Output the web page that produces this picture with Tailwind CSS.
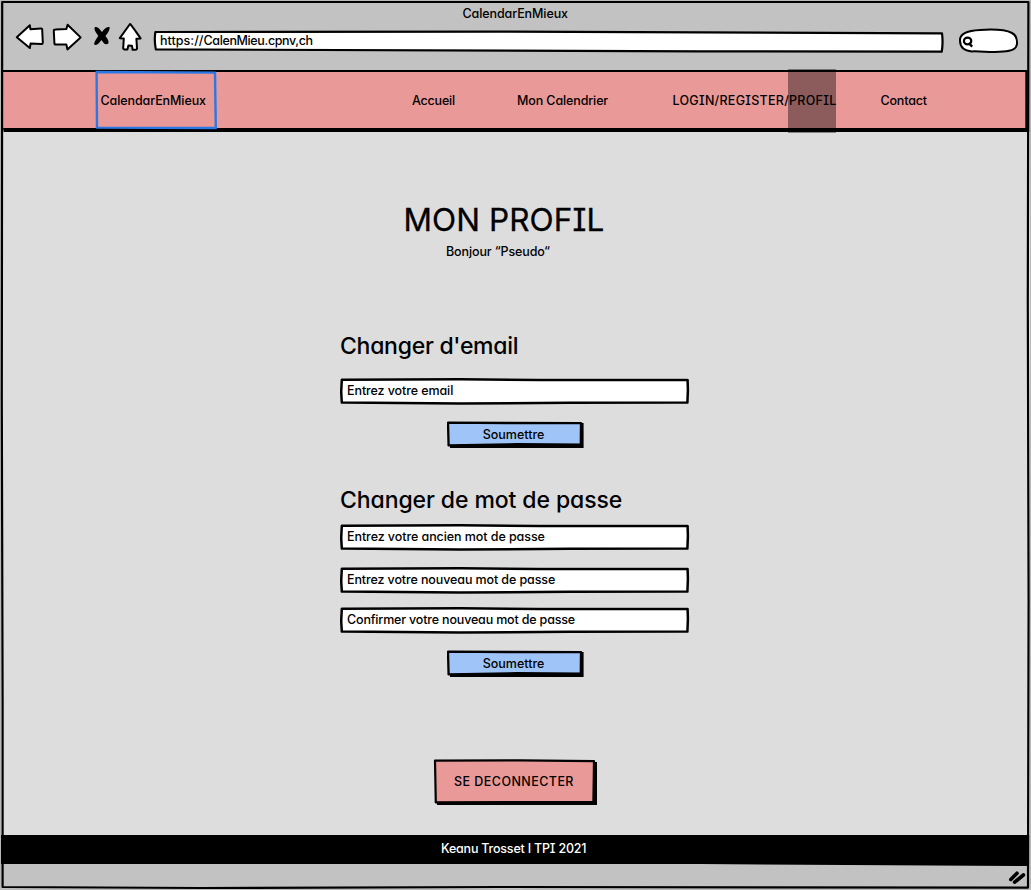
<!DOCTYPE html>
<html lang="fr">
<head>
<meta charset="utf-8">
<title>CalendarEnMieux</title>
<script src="https://cdn.jsdelivr.net/npm/@tailwindcss/browser@4"></script>
</head>
<body class="w-[1031px] h-[890px] overflow-hidden bg-[#c2c2c2] text-black font-medium text-[12.5px] leading-4 font-['Inter','Noto_Sans',sans-serif] [font-feature-settings:'cv11','cv08']">
<svg class="hidden">
  <symbol id="field" viewBox="0 0 350 27">
    <path d="M0 0H349V26H0Z" fill="#e9e9e9"/>
    <path d="M1.8 1.8L120 1.3L200 1.9L347.6 2L347.9 12L347.4 24.6L230 24.8L120 25.4L1.8 24.6L1.2 14Z" fill="#fff" stroke="#000" stroke-width="2.5" stroke-linejoin="round"/>
  </symbol>
  <symbol id="submit" viewBox="0 0 138 28">
    <path d="M3 4L135 2H136.6V27H3Z"/>
    <path d="M1 1.6L60 2L134 2.2L133.8 23.6L70 23.2L1.6 24.4Z" fill="#9fc5f8" stroke="#000" stroke-width="2.3" stroke-linejoin="round"/>
  </symbol>
</svg>
<div class="relative flex flex-col w-[1031px] h-[890px]">
  <header class="h-[70px] shrink-0 flex flex-col bg-[#c2c2c2]">
    <div class="h-[22px] pt-[6px] pl-[462.5px] whitespace-nowrap"><span class="tracking-[-0.09px]">CalendarEnMieux</span></div>
    <div class="flex h-[34px]">
      <svg class="w-[150px] h-[34px] shrink-0" viewBox="0 22 150 34" fill="#fff" stroke="#000" stroke-width="2" stroke-linejoin="round">
        <path d="M16.8 37.2L29.8 25.2L30.4 29.2L41 28.4Q42.4 28.4 42.2 30L42.8 42.6Q42.8 44.2 41.2 44L30.6 43.4L29.8 48Z"/>
        <path d="M53.8 31Q53.8 29.6 55.4 29.6L66.4 29L67.6 24.8L80.6 37.4L67.4 49.4L66.4 44.6L56 44.6Q54.4 44.6 54.4 43Z"/>
        <path d="M94.6 27.4C97.4 25.6 100 29.6 102 32C104 29.6 107 25.8 109.8 27.4C109.4 31.6 106.4 34.4 105.4 36C107 38 109.2 41 108.4 43.6C105 46 103 42 101.4 40C99.6 42 98 46 94.2 44.6C94 41.4 97.4 38 98.2 35.8C96.6 33 94 30.4 94.6 27.4Z" fill="#000" stroke="none"/>
        <path d="M130 24Q131 24.4 140.6 38.4L136.4 38.8L137 48.6Q136.8 50 135 49.8L132.6 49.8L132 45.8L128.4 45.6L127.4 49.6L124.4 49.4Q123 49.2 123.2 48L123.8 38.6L119.8 38.2Z"/>
      </svg>
      <div class="relative w-[796px] h-[34px] shrink-0 pt-[11px] pl-[10px]">
        <svg class="absolute inset-0 w-[796px] h-[34px]" viewBox="150 22 796 34"><path d="M155.4 32L500 31.6L942 33.4Q943.2 42 941.8 51.6L700 51.4L155.8 49.4Q154 40 155.4 32Z" fill="#fff" stroke="#000" stroke-width="2.2" stroke-linejoin="round"/></svg>
        <span class="relative whitespace-nowrap tracking-[-0.37px]"><span class="tracking-[0.04px]">https://</span>CalenMieu.cpnv,ch</span>
      </div>
      <svg class="w-[85px] h-[34px] shrink-0" viewBox="946 22 85 34" fill="none" stroke="#000">
        <path d="M960 40C960 33 968 30.6 980 30C992 29.2 1006 30 1012 33C1016 35.2 1017.4 39 1017 44C1016.6 49 1012 50.6 1003 51.6C992 52.8 982 51 972 51.4C964 50.8 959.8 47 960 40Z" fill="#fff" stroke-width="2"/>
        <ellipse cx="967.6" cy="41" rx="3.7" ry="3.3" stroke-width="2.2"/><path d="M968.6 43L972.2 46.6" stroke-width="2.4"/>
      </svg>
    </div>
  </header>

  <nav class="relative h-[62px] shrink-0 flex items-start pt-[23px] bg-[#ea9999] whitespace-nowrap">
    <svg class="absolute inset-0 w-[1031px] h-[62px]" viewBox="0 70 1031 62">
      <path d="M2 70.8H1026.4V129" fill="none" stroke="#000" stroke-width="2.2"/>
      <path d="M3 128H1028V132L500 132.4H4Z"/>
      <path d="M96.6 72L215 72.6L215.8 128L97 127.6Z" fill="none" stroke="#2b78e4" stroke-width="2.4" stroke-linejoin="round"/>
    </svg>
    <a class="relative w-[311.5px] ml-[100.5px] tracking-[-0.09px]">CalendarEnMieux</a>
    <a class="relative w-[105px] tracking-[-0.2px]">Accueil</a>
    <a class="relative w-[155.5px] tracking-[-0.12px]">Mon Calendrier</a>
    <a class="relative w-[208px] tracking-[0.27px]">LOGIN/REGISTER/PROFIL</a>
    <a class="relative tracking-[-0.18px]">Contact</a>
    <div class="absolute left-[788px] top-[-1px] w-[48px] h-[64px] bg-black/40"></div>
  </nav>

  <main class="h-[703px] shrink-0 bg-[#dddddd] pt-[67px] flex flex-col whitespace-nowrap">
    <h1 class="h-[42px] pl-[403.5px] text-[31.5px] leading-[42px] font-normal tracking-[0.1px] [-webkit-text-stroke:0.3px_#000]">MON PROFIL</h1>
    <p class="mt-[3px] pl-[446px] tracking-[-0.12px]">Bonjour “Pseudo“</p>
    <form class="pl-[340px] mt-[70px] flex flex-col">
      <h2 class="h-8 text-[23px] leading-8 tracking-[-0.27px]">Changer d'email</h2>
      <label class="relative block mt-4 w-[350px] h-[27px] pt-[5px] pl-[7px]"><svg class="absolute inset-0 w-[350px] h-[27px]"><use href="#field"/></svg><span class="relative tracking-[-0.09px]">Entrez votre email</span></label>
      <button type="button" class="relative block ml-[107px] mt-4 w-[138px] h-[28px] pb-[1px] pr-[5px]"><svg class="absolute inset-0 w-[138px] h-[28px]"><use href="#submit"/></svg><span class="relative">Soumettre</span></button>
    </form>
    <form class="pl-[340px] mt-[35px] flex flex-col">
      <h2 class="h-8 text-[23px] leading-8 tracking-[-0.09px]">Changer de mot de passe</h2>
      <label class="relative block mt-[8px] w-[350px] h-[27px] pt-[5px] pl-[7px]"><svg class="absolute inset-0 w-[350px] h-[27px]"><use href="#field"/></svg><span class="relative tracking-[-0.07px]">Entrez votre ancien mot de passe</span></label>
      <label class="relative block mt-4 w-[350px] h-[27px] pt-[5px] pl-[7px]"><svg class="absolute inset-0 w-[350px] h-[27px]"><use href="#field"/></svg><span class="relative tracking-[-0.11px]">Entrez votre nouveau mot de passe</span></label>
      <label class="relative block mt-[13px] w-[350px] h-[27px] pt-[5px] pl-[7px]"><svg class="absolute inset-0 w-[350px] h-[27px]"><use href="#field"/></svg><span class="relative tracking-[-0.17px]">Confirmer votre nouveau mot de passe</span></label>
      <button type="button" class="relative block ml-[107px] mt-4 w-[138px] h-[28px] pb-[1px] pr-[5px]"><svg class="absolute inset-0 w-[138px] h-[28px]"><use href="#submit"/></svg><span class="relative">Soumettre</span></button>
    </form>
    <button type="button" class="relative block ml-[433px] mt-[81px] w-[165px] h-[47px] pb-[2px] pr-[3px] shrink-0">
      <svg class="absolute inset-0 w-[165px] h-[47px]" viewBox="433 759 165 47"><path d="M437 762H597V805H437Z"/><path d="M435 760.6L520 760.4L594 761.2L593.4 802L435.8 802.4Z" fill="#ea9999" stroke="#000" stroke-width="2.2" stroke-linejoin="round"/></svg>
      <span class="relative tracking-[0.44px]">SE DECONNECTER</span>
    </button>
  </main>

  <footer class="h-[29px] shrink-0 bg-black text-white pt-[6px] pl-[441px] whitespace-nowrap tracking-[-0.2px]">Keanu Trosset <span class="[font-feature-settings:normal]">I</span> TPI 2021</footer>
  <div class="h-[26px] shrink-0 bg-[#c2c2c2]"></div>

  <svg class="absolute inset-0 w-[1031px] h-[890px] pointer-events-none" viewBox="0 0 1031 890" fill="none" stroke="#000">
    <path d="M0 0H1031V890H0Z" stroke="#b9b9b9" stroke-width="2"/>
    <path d="M1030 835V864" stroke="#b9b9b9" stroke-width="2"/>
    <path d="M2.2 2L500 2L1028.4 2L1027.8 300L1028.6 600L1028 887.6L500 887L200 888L2.6 887L2.6 700L1.8 400Z" stroke-width="2.2" stroke-linejoin="round"/>
    <path d="M700 864H1028V866Z" fill="#000" stroke="none"/>
    <path d="M1010.8 879.4L1017 873.2M1014.6 882.2L1023.4 875" stroke-width="3.6" stroke-linecap="round"/>
  </svg>
</div>
</body>
</html>
